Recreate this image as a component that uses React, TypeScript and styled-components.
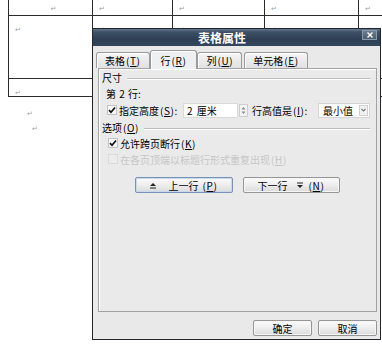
import React from 'react';
import styled, { createGlobalStyle } from 'styled-components';

const GlobalStyle = createGlobalStyle`
  html, body {
    margin: 0;
    padding: 0;
    background: #fff;
    overflow: hidden;
  }
  body {
    font-family: "Noto Sans CJK SC", "Liberation Sans", sans-serif;
    font-size: 10px;
    color: #000;
  }
`;

const Page = styled.div`
  position: relative;
  width: 382px;
  height: 344px;
  overflow: hidden;
  background: #fff;
`;

/* ---- the Word document behind the dialog ---- */

const DocTable = styled.div`
  display: grid;
  grid-template-columns: 84px 80px 92px 94px 60px;
  grid-template-rows: 21px 63px 18px;
  width: max-content;
  margin: -5px 0 0 8px;
  border-left: 1px solid #2b2b2b;
`;

const Cell = styled.div<{ $center?: boolean }>`
  box-sizing: border-box;
  border-right: 1px solid #2b2b2b;
  border-bottom: 1px solid #2b2b2b;
  padding: 9px 0 0 6px;
  line-height: 6px;
  text-align: ${p => (p.$center ? 'center' : 'left')};
`;

const Mark = styled.span`
  font-family: "DejaVu Sans", sans-serif;
  font-size: 7px;
  line-height: 6px;
  color: #a0a0a0;
`;

const AfterTable = styled.div`
  padding-top: 12px;
`;

const Para = styled.div<{ $indent: number }>`
  height: 15px;
  padding-left: ${p => p.$indent}px;
  line-height: 6px;
`;

/* ---- dialog ---- */

const Dialog = styled.div`
  position: absolute;
  left: 92px;
  top: 28px;
  width: 289px;
  height: 312px;
  box-sizing: border-box;
  border: 1px solid #23272d;
  background: #e9e9e9;
  display: flex;
  flex-direction: column;
`;

const TitleBar = styled.div`
  flex: none;
  height: 17px;
  display: flex;
  align-items: flex-start;
  padding-right: 3px;
  background: linear-gradient(180deg, #62768c 0%, #3d5066 18%, #2e3f54 60%, #33465c 100%);
`;

const Title = styled.div`
  flex: 1;
  align-self: center;
  padding-right: 11px;
  text-align: center;
  color: #fff;
  font-size: 12px;
  font-weight: bold;
  line-height: 17px;
`;

const CloseBtn = styled.div`
  width: 15px;
  height: 10px;
  margin-top: 1px;
  box-sizing: border-box;
  border: 1px solid #8a98a9;
  background: linear-gradient(#6b7d91, #4a5c70);
  display: flex;
  align-items: center;
  justify-content: center;
`;

const Body = styled.div`
  flex: 1;
  display: flex;
  flex-direction: column;
  padding: 4px 3px 3px 5px;
`;

const TabStrip = styled.div`
  display: flex;
  align-items: flex-end;
  height: 19px;
  margin: 0 0 -1px -3px;
  position: relative;
  z-index: 1;
`;

const Tab = styled.div<{ $active?: boolean }>`
  box-sizing: border-box;
  height: ${p => (p.$active ? 19 : 16)}px;
  margin: 0 ${p => (p.$active ? '-1px' : '1px')} ${p => (p.$active ? 0 : 1)}px;
  padding: 0 ${p => (p.$active ? 10 : 8)}px;
  border: 1px solid #9a9a9a;
  border-bottom: none;
  border-radius: 3px 3px 0 0;
  background: ${p => (p.$active ? '#eeeff1' : 'linear-gradient(#f5f5f5, #e1e1e1)')};
  box-shadow: inset 1px 1px 0 #fff;
  display: flex;
  align-items: center;
  white-space: nowrap;
  position: relative;
  z-index: ${p => (p.$active ? 2 : 1)};
`;

const Key = styled.span`
  letter-spacing: 0.6px;
  margin-left: 1px;
`;

const Panel = styled.div`
  flex: 1;
  box-sizing: border-box;
  border: 1px solid #a2a2a2;
  box-shadow: inset 1px 1px 0 #fff;
  background: #eaeaea;
  padding: 0 6px 0 3px;
  display: flex;
  flex-direction: column;
`;

const SectionHead = styled.div`
  height: 16px;
  display: flex;
  align-items: center;
  gap: 5px;
  white-space: nowrap;
`;

const Rule = styled.div`
  flex: 1;
  height: 0;
  margin-top: 3px;
  border-top: 1px solid #bcbcbc;
  border-bottom: 1px solid #fff;
`;

const Line = styled.div`
  height: 16px;
  display: flex;
  align-items: center;
  padding-left: 4px;
  word-spacing: 1px;
`;

const FieldRow = styled.div`
  height: 18px;
  display: flex;
  align-items: center;
  padding-left: 5px;
  white-space: nowrap;
`;

const FieldLabel = styled.span<{ $w: number }>`
  width: ${p => p.$w}px;
  flex: none;
`;

const NumberBox = styled.div`
  width: 55px;
  height: 15px;
  box-sizing: border-box;
  padding-left: 3px;
  background: #fff;
  border: 1px solid #d9d9d9;
  display: flex;
  align-items: center;
  word-spacing: 2px;
`;

const Spin = styled.div`
  width: 9px;
  height: 13px;
  margin: 0 4px 0 1px;
  box-sizing: border-box;
  border: 1px solid #cdcdcd;
  background: #f3f3f3;
  display: flex;
  align-items: center;
  justify-content: center;
`;

const SelectBox = styled.div`
  width: 52px;
  height: 15px;
  box-sizing: border-box;
  padding: 0 1px 0 4px;
  background: #fff;
  border: 1px solid #d4d4d4;
  display: flex;
  align-items: center;
  justify-content: space-between;
`;

const DropBtn = styled.div`
  width: 9px;
  height: 11px;
  box-sizing: border-box;
  border: 1px solid #d0d0d0;
  background: #f1f1f1;
  display: flex;
  align-items: center;
  justify-content: center;
`;

const CheckRow = styled.div<{ $disabled?: boolean }>`
  height: 16px;
  display: flex;
  align-items: center;
  gap: 2px;
  padding-left: 6px;
  white-space: nowrap;
  color: ${p => (p.$disabled ? '#c6c6c6' : '#000')};
`;

const Box = styled.span<{ $disabled?: boolean }>`
  flex: none;
  width: 10px;
  height: 10px;
  box-sizing: border-box;
  border: 1px solid ${p => (p.$disabled ? '#dadada' : '#c4c4c4')};
  background: ${p => (p.$disabled ? '#ececec' : '#f7f7f7')};
  display: inline-flex;
  align-items: center;
  justify-content: center;
`;

const NavRow = styled.div`
  display: flex;
  justify-content: center;
  gap: 10px;
  margin-top: 10px;
  padding-left: 2px;
`;

const Button = styled.div<{ $w: number; $focus?: boolean }>`
  width: ${p => p.$w}px;
  height: 16px;
  box-sizing: border-box;
  border: 1px solid ${p => (p.$focus ? '#7693b6' : '#969696')};
  border-radius: 2px;
  background: linear-gradient(#fcfcfc, #ececec 55%, #dadada);
  box-shadow: ${p => (p.$focus ? 'inset 0 0 0 1px #c9d8ea' : 'inset 0 0 0 1px #f6f6f6')};
  display: flex;
  align-items: center;
  justify-content: center;
  gap: 3px;
  white-space: nowrap;
`;

const Footer = styled.div`
  display: flex;
  justify-content: flex-end;
  gap: 6px;
  margin-top: 8px;
`;

const Check = ({ disabled }: { disabled?: boolean }) => (
  <Box $disabled={disabled}>
    {!disabled && (
      <svg width="8" height="8" viewBox="0 0 8 8">
        <path d="M1 4.2 L3 6.3 L7 1.5" fill="none" stroke="#111" strokeWidth="1.7" />
      </svg>
    )}
  </Box>
);

const ArrowBar = ({ up }: { up?: boolean }) => (
  <svg width="6" height="7" viewBox="0 0 6 7" style={{ margin: up ? '0 10px 0 0' : '0 2px 0 6px' }}>
    {up ? (
      <>
        <path d="M0 4 L3 1 L6 4 Z" fill="#222" />
        <rect x="0" y="5.5" width="6" height="1" fill="#222" />
      </>
    ) : (
      <>
        <rect x="0" y="0.5" width="6" height="1" fill="#222" />
        <path d="M0 3 L3 6 L6 3 Z" fill="#222" />
      </>
    )}
  </svg>
);

const topRow = ['', '', '', '', ''];

export default function App() {
  return (
    <Page>
      <GlobalStyle />
      <DocTable>
        {topRow.map((_, i) => (
          <Cell key={'a' + i} $center={i === 0}>
            <Mark>↵</Mark>
          </Cell>
        ))}
        {topRow.map((_, i) => (
          <Cell key={'b' + i}>
            <Mark>↵</Mark>
          </Cell>
        ))}
        {topRow.map((_, i) => (
          <Cell key={'c' + i}>{i === 0 && <Mark>↵</Mark>}</Cell>
        ))}
      </DocTable>
      <AfterTable>
        <Para $indent={27}>
          <Mark>↵</Mark>
        </Para>
        <Para $indent={32}>
          <Mark>↵</Mark>
        </Para>
      </AfterTable>

      <Dialog>
        <TitleBar>
          <Title>表格属性</Title>
          <CloseBtn>
            <svg width="6" height="6" viewBox="0 0 6 6">
              <path d="M0.5 0.5 L5.5 5.5 M5.5 0.5 L0.5 5.5" stroke="#fff" strokeWidth="1.4" />
            </svg>
          </CloseBtn>
        </TitleBar>
        <Body>
          <TabStrip>
            <Tab>
              表格<Key>(<u>T</u>)</Key>
            </Tab>
            <Tab $active>
              行<Key>(<u>R</u>)</Key>
            </Tab>
            <Tab>
              列<Key>(<u>U</u>)</Key>
            </Tab>
            <Tab>
              单元格<Key>(<u>E</u>)</Key>
            </Tab>
          </TabStrip>
          <Panel>
            <SectionHead>
              <span>尺寸</span>
              <Rule />
            </SectionHead>
            <Line>第 2 行:</Line>
            <FieldRow>
              <Check />
              <FieldLabel $w={64} style={{ marginLeft: 2 }}>
                指定高度<Key>(<u>S</u>)</Key>:
              </FieldLabel>
              <NumberBox>2 厘米</NumberBox>
              <Spin>
                <svg width="5" height="9" viewBox="0 0 5 9">
                  <path d="M0.5 3.5 L2.5 1 L4.5 3.5 Z M0.5 5.5 L2.5 8 L4.5 5.5 Z" fill="#8a8a8a" />
                </svg>
              </Spin>
              <FieldLabel $w={66}>
                行高值是<Key>(<u>I</u>)</Key>:
              </FieldLabel>
              <SelectBox>
                <span>最小值</span>
                <DropBtn>
                  <svg width="5" height="4" viewBox="0 0 5 4">
                    <path d="M0.5 1 L2.5 3 L4.5 1" fill="none" stroke="#777" strokeWidth="1.1" />
                  </svg>
                </DropBtn>
              </SelectBox>
            </FieldRow>
            <SectionHead>
              <span>
                选项<Key>(<u>O</u>)</Key>
              </span>
              <Rule />
            </SectionHead>
            <CheckRow>
              <Check />
              <span>
                允许跨页断行<Key>(<u>K</u>)</Key>
              </span>
            </CheckRow>
            <CheckRow $disabled>
              <Check disabled />
              <span>
                在各页顶端以标题行形式重复出现<Key>(<u>H</u>)</Key>
              </span>
            </CheckRow>
            <NavRow>
              <Button $w={98} $focus>
                <ArrowBar up />
                上一行<Key>(<u>P</u>)</Key>
              </Button>
              <Button $w={97}>
                下一行
                <ArrowBar />
                <Key>(<u>N</u>)</Key>
              </Button>
            </NavRow>
          </Panel>
          <Footer>
            <Button $w={59}>确定</Button>
            <Button $w={59}>取消</Button>
          </Footer>
        </Body>
      </Dialog>
    </Page>
  );
}
